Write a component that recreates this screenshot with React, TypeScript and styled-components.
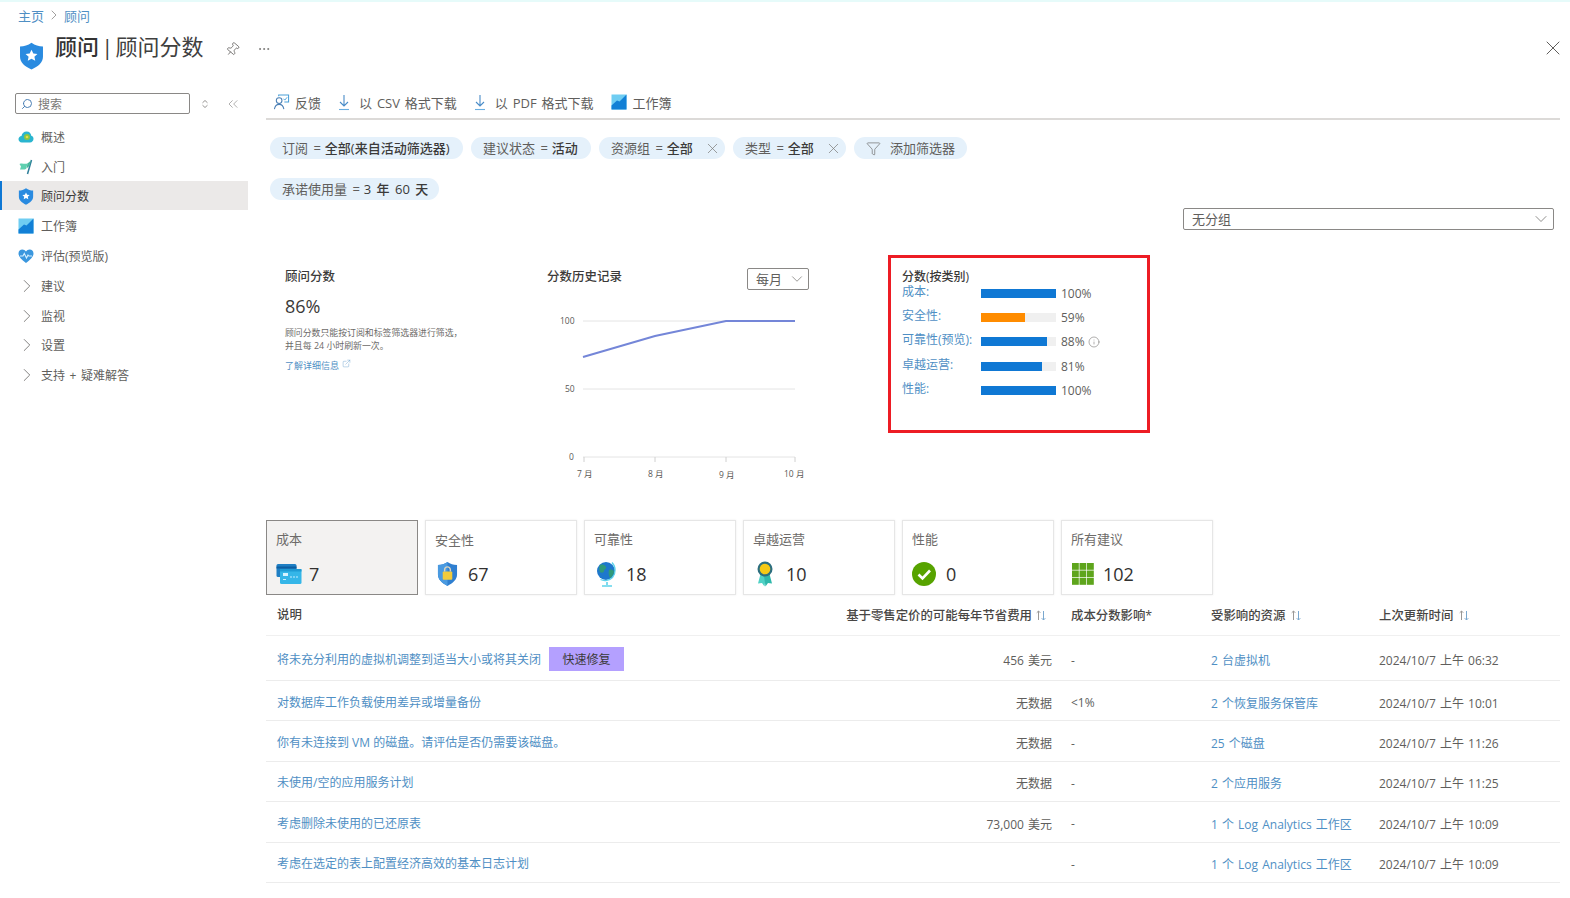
import styled, { createGlobalStyle } from "styled-components";
import {
  ChevronDown,
  ChevronRight,
  ChevronsLeft,
  Ellipsis,
  ExternalLink,
  Funnel,
  Info,
  Pin,
  Search,
  X,
} from "lucide-react";
import { ReactNode } from "react";

const GlobalStyle = createGlobalStyle`
  html, body {
    margin: 0;
    padding: 0;
    background: #fff;
    font-family: "Open Sans", "Noto Sans CJK SC", sans-serif;
    color: #605e5c;
  }
  * { box-sizing: border-box; }
`;

const BLUE = "#4f8fc4";

/* coloured icons */
const ShieldIcon = ({ size }: { size: number }) => (
  <svg width={size} height={size} viewBox="0 0 24 24" style={{ flexShrink: 0 }}>
    <path d="M12 1.5c3 2.200 6 3 9.500 3v8.500c0 4.800-4 8-9.500 10.500C6.500 21 2.500 17.800 2.500 13V4.500C6 4.500 9 3.700 12 1.500z" fill="#2a8be0" />
    <path d="M12 7.200l1.500 3.100 3.400.4-2.500 2.300.7 3.400-3.100-1.700-3.100 1.700.7-3.400-2.500-2.300 3.400-.4z" fill="#fff" />
  </svg>
);

const OverviewIcon = () => (
  <svg width="16" height="16" viewBox="0 0 16 16">
    <path d="M4 13.500C1.500 13.500.5 11.500.5 10S2 7 3.500 7C4 4 6 2.500 8.500 2.500c3 0 4.500 2 4.800 4.300 1.500.3 2.200 1.500 2.200 3 0 2-1.500 3.700-3.500 3.700z" fill="#2ab5cf" />
    <circle cx="9" cy="8" r="3" fill="#8cc63f" />
    <circle cx="9" cy="8" r="1.300" fill="#e8d84a" />
  </svg>
);

const StartIcon = () => (
  <svg width="16" height="16" viewBox="0 0 16 16">
    <path d="M1.500 5c3-1.200 5 .6 8-.5l-1.500 5.500c-2.500 1-4 .2-6 .5L3 7.500z" fill="#5fd0b0" />
    <path d="M13.500 1L9.500 15" stroke="#2f7f9a" strokeWidth="1.500" fill="none" />
    <path d="M9.500 4.500l3.500-3-1.600 5.500-3 2.500z" fill="#45b89a" />
  </svg>
);

const WorkbookIcon = ({ size }: { size: number }) => (
  <svg width={size} height={size} viewBox="0 0 16 16" style={{ flexShrink: 0 }}>
    <rect x="0.500" y="0.500" width="15" height="15" fill="#6fcdf2" />
    <path d="M.5 15.500V11.500L6 6.500l2.500 1L15.500.5v15z" fill="#1280d6" />
  </svg>
);

const HeartIcon = () => (
  <svg width="16" height="16" viewBox="0 0 16 16">
    <path d="M8 15C3 11 .5 8.500.5 5.500.5 3 2.300 1.500 4.300 1.500 5.800 1.500 7.200 2.300 8 3.500c.8-1.200 2.200-2 3.700-2 2 0 3.800 1.500 3.800 4 0 3-2.500 5.500-7.500 9.500z" fill="#3a97de" />
    <path d="M2 8h3l1.300-2.500L8.500 10l1.500-3 .8 1H14" stroke="#d6f0ff" strokeWidth="1.100" fill="none" />
  </svg>
);

const FeedbackIcon = () => (
  <svg width="17" height="18" viewBox="0 0 18 18" fill="none">
    <circle cx="6.500" cy="7.500" r="3" stroke="#4a7fb5" strokeWidth="1.100" />
    <path d="M1.500 16.500c.5-3 2.500-5 5-5s4.500 2 5 5" stroke="#4a7fb5" strokeWidth="1.100" />
    <path d="M6 3V1.500h10.500V9H12" stroke="#4a9fd8" strokeWidth="1.100" />
    <path d="M11 5.500l1.500 1.500L15 4" stroke="#4a9fd8" strokeWidth="1" />
  </svg>
);

const DownloadIcon = () => (
  <svg width="12" height="17" viewBox="0 0 12 17" fill="none" stroke="#4a8cc8" strokeWidth="1.100">
    <path d="M6 1v11M2 8l4 4 4-4" />
    <path d="M1 15.500h10" stroke="#6aaee0" />
  </svg>
);

const SortMarkIcon = () => (
  <svg width="10" height="11" viewBox="0 0 10 11" fill="none" stroke="#9a9896" strokeWidth="1">
    <path d="M2.500 10V1M.7 2.800l1.800-1.800 1.800 1.800" />
    <path d="M7.500 1v9M5.700 8.200l1.800 1.800 1.800-1.800" stroke="#7aa8cf" />
  </svg>
);

const UpDownIcon = () => (
  <svg width="8" height="10" viewBox="0 0 8 10" fill="none" stroke="#8a8886" strokeWidth="0.900">
    <path d="M1.500 3.800L4 1.500l2.500 2.300M1.500 6.200L4 8.500l2.500-2.300" />
  </svg>
);

const CostIcon = () => (
  <svg width="26" height="22" viewBox="0 0 26 22">
    <rect x="0.500" y="1" width="20" height="13" rx="1.500" fill="#1f7fc4" />
    <rect x="0.500" y="3.500" width="20" height="2" fill="#0d5ea0" />
    <rect x="4" y="6" width="21.500" height="15" rx="1.500" fill="#35b6e8" />
    <rect x="4" y="6" width="21.500" height="2.500" fill="#1f9bd4" />
    <rect x="7" y="10" width="5" height="3" fill="#d6f3ff" />
    <path d="M14 14h2M17 14h2M20 14h2M7 16.500h3" stroke="#c6eeff" strokeWidth="1.200" />
  </svg>
);

const LockShieldIcon = () => (
  <svg width="21" height="26" viewBox="0 0 22 26">
    <path d="M11 .5c3 2 6 3 10 3v10c0 5.500-4.500 9-10 12C5.500 22.500 1 19 1 13.500v-10c4 0 7-1 10-3z" fill="#2f7fd0" />
    <path d="M11 .5v25C5.500 22.500 1 19 1 13.500v-10c4 0 7-1 10-3z" fill="#4a9ae0" />
    <rect x="6" y="10.500" width="10" height="8.500" rx="1" fill="#f2cb3a" />
    <path d="M8 10.500V8.500a3 3 0 016 0v2" stroke="#d9d4c0" strokeWidth="1.500" fill="none" />
  </svg>
);

const GlobeIcon = () => (
  <svg width="22" height="26" viewBox="0 0 22 26">
    <circle cx="10" cy="10" r="9" fill="#1e78cc" />
    <path d="M4 4c3-1 5 0 6 2s-2 2-2 4-3 2-4 1-1-5 0-7zM13 9c2-1 4 0 5 1 0 3-2 6-4 7-1-2-2-5-1-8z" fill="#2f9a7a" />
    <path d="M16 1.500c4 4 4 11 .5 15-3 3-8 4-12 2" stroke="#5fd3ea" strokeWidth="1.300" fill="none" />
    <path d="M11 21v3M6 25h10" stroke="#5fd3ea" strokeWidth="1.600" />
  </svg>
);

const MedalIcon = () => (
  <svg width="18" height="26" viewBox="0 0 18 26">
    <path d="M4.500 13L2 22.500l4-.5 2.500 3.500L10 15z" fill="#4fd1c5" />
    <path d="M13.500 13l2.500 9.500-4-.5-2.500 3.500L8 15z" fill="#2fb8ab" />
    <circle cx="9" cy="8" r="7.500" fill="#2c6e7f" />
    <circle cx="9" cy="8" r="5.300" fill="#f6c915" />
  </svg>
);

const CheckIcon = () => (
  <svg width="24" height="24" viewBox="0 0 24 24">
    <circle cx="12" cy="12" r="12" fill="#57a300" />
    <path d="M6.500 12.500l4 4 7.500-8" stroke="#fff" strokeWidth="2.600" fill="none" />
  </svg>
);

const GridIcon = () => (
  <svg width="22" height="22" viewBox="0 0 22 22">
    {[0, 1, 2].flatMap((r) =>
      [0, 1, 2].map((c) => (
        <rect key={`${r}-${c}`} x={c * 7.500} y={r * 7.500} width="6.800" height="6.800" fill="#5ea51c" />
      )),
    )}
  </svg>
);

/* page shell */
const Page = styled.div`
  width: 1570px;
  height: 898px;
  overflow: hidden;
  display: flex;
  flex-direction: column;
  border-top: 2px solid #e6fbfa;
`;

const Header = styled.header`
  height: 91px;
  padding: 5px 5px 0 18px;
  display: flex;
  flex-direction: column;
`;

const Breadcrumb = styled.nav`
  display: flex;
  align-items: center;
  gap: 2px;
  height: 16px;
  font-size: 13px;
  color: ${BLUE};
  svg { color: #8a8886; }
`;

const TitleRow = styled.div`
  display: flex;
  align-items: center;
  margin-top: 8px;
  height: 40px;
`;

const TitleIconSlot = styled.span`
  display: flex;
  margin: 8px 9px 0 -1px;
`;

const Title = styled.h1`
  margin: -10px 0 0;
  font-size: 22px;
  font-weight: 400;
  color: #404040;
  line-height: 30px;
  word-spacing: -3.500px;
  b { font-weight: 500; color: #333; }
`;

const TitleAction = styled.span<{ $gap: number }>`
  display: flex;
  margin: -4px 0 0 ${(p) => p.$gap}px;
  color: #605e5c;
`;

const PinGlyph = styled(Pin)`
  transform: rotate(40deg);
`;

const CloseButton = styled.span`
  display: flex;
  margin: -6px 0 0 auto;
  color: #605e5c;
`;

const Body = styled.div`
  flex: 1;
  display: flex;
  gap: 18px;
  min-height: 0;
`;

/* side menu */
const Sidebar = styled.aside`
  width: 248px;
  flex-shrink: 0;
`;

const SearchRow = styled.div`
  display: flex;
  align-items: center;
  padding-left: 15px;
  height: 21px;
  margin-bottom: 7px;
`;

const SearchBox = styled.div`
  width: 175px;
  height: 21px;
  border: 1px solid #8a8886;
  border-radius: 2px;
  display: flex;
  align-items: center;
  gap: 5px;
  padding-left: 5px;
  font-size: 12px;
  color: #7a7876;
  svg { color: #4a7fb5; transform: scaleX(-1); }
`;

const SearchAction = styled.span<{ $gap: number }>`
  display: flex;
  margin-left: ${(p) => p.$gap}px;
  color: #8a8886;
`;

const MenuItem = styled.div<{ $active?: boolean; $gap: number }>`
  height: 29.800px;
  display: flex;
  align-items: center;
  gap: ${(p) => p.$gap}px;
  padding-top: 2px;
  padding-left: ${(p) => (p.$active ? 15 : 18)}px;
  font-size: 12px;
  word-spacing: 1.500px;
  color: ${(p) => (p.$active ? "#3b3a39" : "#605e5c")};
  background: ${(p) => (p.$active ? "#ebe9e8" : "transparent")};
  border-left: ${(p) => (p.$active ? "2px solid #0f78d4" : "none")};
`;

const MenuChevron = styled.span`
  display: flex;
  width: 17px;
  justify-content: center;
  color: #7a7876;
  svg { flex-shrink: 0; }
`;

/* main column */
const Main = styled.main`
  width: 1294px;
  display: flex;
  flex-direction: column;
`;

const Toolbar = styled.div`
  height: 27px;
  display: flex;
  align-items: flex-start;
  gap: 17px;
  padding-left: 7px;
  border-bottom: 2px solid #dcdad8;
`;

const ToolButton = styled.span<{ $gap: number }>`
  display: flex;
  align-items: center;
  gap: ${(p) => p.$gap}px;
  height: 18px;
  font-size: 13px;
  word-spacing: 1.500px;
  color: #605e5c;
  white-space: nowrap;
`;

const ChipRow = styled.div<{ $top: number }>`
  display: flex;
  gap: 8px;
  margin-top: ${(p) => p.$top}px;
  padding-left: 4px;
`;

const Chip = styled.span<{ $width: number }>`
  width: ${(p) => p.$width}px;
  height: 22px;
  display: inline-flex;
  align-items: center;
  padding: 0 12px 2px;
  border-radius: 11px;
  background: #e5f1fb;
  font-size: 13px;
  color: #605e5c;
  white-space: nowrap;
  word-spacing: 2px;
  b { font-weight: 500; color: #3b3a39; margin-left: 4px; }
`;

const ChipClose = styled.span`
  display: flex;
  margin-left: auto;
  margin-right: -8px;
  margin-top: 2px;
  color: #7a7876;
`;

const FilterGlyph = styled(Funnel)`
  margin: 2px 9px 0 0;
`;

const GroupRow = styled.div`
  display: flex;
  justify-content: flex-end;
  padding-right: 6px;
  margin-top: 8px;
`;

const Select = styled.div<{ $width: number }>`
  width: ${(p) => p.$width}px;
  height: 22px;
  display: flex;
  align-items: center;
  justify-content: space-between;
  padding: 0 2px 0 8px;
  border: 1px solid #8a8886;
  border-radius: 2px;
  font-size: 13px;
  color: #605e5c;
  span { margin-top: -2px; }
  svg { color: #7a7876; }
`;

const Panels = styled.section`
  height: 265px;
  margin-top: 25px;
  display: flex;
  padding-left: 19px;
`;

const ScorePanel = styled.div`
  width: 262px;
  padding-top: 15px;
`;

const PanelTitle = styled.h3`
  margin: 0;
  font-size: 12.500px;
  line-height: 14px;
  font-weight: 500;
  color: #3b3a39;
`;

const ScoreValue = styled.div`
  margin-top: 10px;
  font-size: 18px;
  line-height: 24px;
  color: #3b3a39;
`;

const ScoreNote = styled.p`
  margin: 8px 0 0;
  font-size: 8.900px;
  line-height: 13px;
  color: #6d6b69;
`;

const LearnLink = styled.a`
  display: inline-flex;
  align-items: flex-start;
  gap: 3px;
  margin-top: 4px;
  font-size: 9px;
  line-height: 13px;
  color: ${BLUE};
`;

const HistoryPanel = styled.div`
  width: 341px;
  padding-top: 13px;
`;

const HistoryHead = styled.div`
  width: 262px;
  height: 33px;
  display: flex;
  align-items: flex-start;
  justify-content: space-between;
  ${PanelTitle} { margin-top: 2px; }
`;

const ChartSvg = styled.svg`
  display: block;
  font-size: 8.500px;
  fill: #5a5856;
`;

const CategoryBox = styled.div`
  width: 262px;
  height: 178px;
  border: 3px solid #ed1c24;
  padding: 12px 0 0 11px;
`;

const CategoryTitle = styled.h3`
  margin: 0 0 -2px;
  font-size: 12px;
  line-height: 13px;
  font-weight: 500;
  color: #3b3a39;
`;

const CategoryRow = styled.div`
  height: 24.300px;
  display: flex;
  align-items: center;
  font-size: 12px;
`;

const CategoryLabel = styled.span`
  width: 79px;
  flex-shrink: 0;
  margin-top: -5px;
  color: ${BLUE};
  white-space: nowrap;
`;

const BarTrack = styled.span`
  width: 75px;
  height: 9px;
  background: #f0f0f0;
  display: flex;
`;

const BarFill = styled.span<{ $warn?: boolean }>`
  display: block;
  background: ${(p) => (p.$warn ? "#ff8c00" : "#0f78d4")};
`;

const BarValue = styled.span`
  margin-left: 5px;
  color: #605e5c;
  display: inline-flex;
  align-items: center;
  gap: 3px;
`;

const Cards = styled.div`
  display: flex;
  gap: 7px;
`;

const Card = styled.div<{ $active?: boolean; $titleDrop: number }>`
  width: 152px;
  height: 75px;
  padding: ${(p) => 10 + p.$titleDrop}px 0 0 9px;
  border: ${(p) => (p.$active ? "1px solid #8a8886" : "1px solid #e6e6e6")};
  background: ${(p) => (p.$active ? "#f3f2f1" : "#fff")};
  box-shadow: ${(p) => (p.$active ? "none" : "0 0 2px rgba(0,0,0,.08)")};
`;

const CardTitle = styled.div`
  font-size: 13px;
  line-height: 16px;
  color: #6d6b69;
`;

const CardValue = styled.div<{ $inset: number; $gap: number; $top: number }>`
  margin-top: ${(p) => p.$top}px;
  height: 28px;
  padding-left: ${(p) => p.$inset}px;
  display: flex;
  align-items: center;
  gap: ${(p) => p.$gap}px;
  font-size: 18px;
  font-weight: 500;
  color: #323130;
`;

/* table */
const GRID = "434px 352px 159px 168px 181px";

const TableHead = styled.div`
  height: 41px;
  display: grid;
  grid-template-columns: ${GRID};
  align-items: center;
  border-bottom: 1px solid #f0f0f0;
  font-size: 12.400px;
  font-weight: 500;
  color: #484644;
`;

const Row = styled.div<{ $tall?: boolean }>`
  height: ${(p) => (p.$tall ? "45px" : "40.400px")};
  display: grid;
  grid-template-columns: ${GRID};
  align-items: center;
  padding-top: 4px;
  border-bottom: 1px solid #ececec;
  font-size: 12px;
  word-spacing: 1px;
  color: #605e5c;
`;

const DescCell = styled.div`
  padding: 0 0 2px 11px;
  display: flex;
  align-items: center;
  gap: 8px;
  white-space: nowrap;
  word-spacing: 0;
`;

const AmountCell = styled.div<{ $head?: boolean }>`
  display: flex;
  justify-content: flex-end;
  align-items: center;
  gap: 4px;
  padding-right: ${(p) => (p.$head ? 6 : 0)}px;
  white-space: nowrap;
`;

const ImpactCell = styled.div`
  padding-left: 19px;
  white-space: nowrap;
`;

const PlainCell = styled.div`
  display: flex;
  align-items: center;
  gap: 6px;
  white-space: nowrap;
`;

const TableLink = styled.a`
  color: ${BLUE};
  white-space: nowrap;
`;

const QuickFix = styled.span`
  height: 24px;
  width: 75px;
  display: inline-flex;
  align-items: center;
  justify-content: center;
  background: #b4a0ff;
  font-size: 12px;
  color: #3b3a39;
`;

const menu: { label: string; icon?: ReactNode; active?: boolean }[] = [
  { label: "概述", icon: <OverviewIcon /> },
  { label: "入门", icon: <StartIcon /> },
  { label: "顾问分数", icon: <ShieldIcon size={18} />, active: true },
  { label: "工作簿", icon: <WorkbookIcon size={16} /> },
  { label: "评估(预览版)", icon: <HeartIcon /> },
  { label: "建议" },
  { label: "监视" },
  { label: "设置" },
  { label: "支持 + 疑难解答" },
];

const categories = [
  { label: "成本:", score: 100 },
  { label: "安全性:", score: 59, warn: true },
  { label: "可靠性(预览):", score: 88, info: true },
  { label: "卓越运营:", score: 81 },
  { label: "性能:", score: 100 },
];

const cards = [
  { title: "成本", value: "7", icon: <CostIcon />, active: true, inset: 0, gap: 7, drop: 0 },
  { title: "安全性", value: "67", icon: <LockShieldIcon />, inset: 2, gap: 10, drop: 1 },
  { title: "可靠性", value: "18", icon: <GlobeIcon />, inset: 2, gap: 8, drop: 0 },
  { title: "卓越运营", value: "10", icon: <MedalIcon />, inset: 3, gap: 12, drop: 0 },
  { title: "性能", value: "0", icon: <CheckIcon />, inset: 0, gap: 10, drop: 0 },
  { title: "所有建议", value: "102", icon: <GridIcon />, inset: 1, gap: 9, drop: 0 },
];

const rows = [
  { desc: "将未充分利用的虚拟机调整到适当大小或将其关闭", fix: true, amount: "456 美元", impact: "-", res: "2 台虚拟机", date: "2024/10/7 上午 06:32" },
  { desc: "对数据库工作负载使用差异或增量备份", amount: "无数据", impact: "<1%", res: "2 个恢复服务保管库", date: "2024/10/7 上午 10:01" },
  { desc: "你有未连接到 VM 的磁盘。请评估是否仍需要该磁盘。", amount: "无数据", impact: "-", res: "25 个磁盘", date: "2024/10/7 上午 11:26" },
  { desc: "未使用/空的应用服务计划", amount: "无数据", impact: "-", res: "2 个应用服务", date: "2024/10/7 上午 11:25" },
  { desc: "考虑删除未使用的已还原表", amount: "73,000 美元", impact: "-", res: "1 个 Log Analytics 工作区", date: "2024/10/7 上午 10:09" },
  { desc: "考虑在选定的表上配置经济高效的基本日志计划", amount: "", impact: "-", res: "1 个 Log Analytics 工作区", date: "2024/10/7 上午 10:09" },
];

const HistoryChart = () => (
  <ChartSvg width="261" height="190" viewBox="0 0 261 190">
    {[20, 88, 156].map((y) => (
      <line key={y} x1="36" x2="248" y1={y} y2={y} stroke="#e4e4e4" />
    ))}
    {[37, 108, 179, 248].map((x) => (
      <line key={x} x1={x} x2={x} y1="156" y2="161" stroke="#d0d0d0" />
    ))}
    <polyline points="36,56 108,35 179,20 248,20" fill="none" stroke="#7486d8" strokeWidth="2" />
    <text x="13" y="23">100</text>
    <text x="18" y="91">50</text>
    <text x="22" y="159">0</text>
    <text x="30" y="176">7 月</text>
    <text x="101" y="176">8 月</text>
    <text x="172" y="177">9 月</text>
    <text x="237" y="176">10 月</text>
  </ChartSvg>
);

const App = () => {
  return (
    <Page>
      <GlobalStyle />
      <Header>
        <Breadcrumb>
          <span>主页</span>
          <ChevronRight size={16} strokeWidth={1.200} />
          <span>顾问</span>
        </Breadcrumb>
        <TitleRow>
          <TitleIconSlot>
            <ShieldIcon size={29} />
          </TitleIconSlot>
          <Title>
            <b>顾问</b> | 顾问分数
          </Title>
          <TitleAction $gap={21}>
            <PinGlyph size={15} strokeWidth={1.200} />
          </TitleAction>
          <TitleAction $gap={17}>
            <Ellipsis size={14} strokeWidth={1.200} />
          </TitleAction>
          <CloseButton>
            <X size={24} strokeWidth={1} />
          </CloseButton>
        </TitleRow>
      </Header>
      <Body>
        <Sidebar>
          <SearchRow>
            <SearchBox>
              <Search size={12} />
              搜索
            </SearchBox>
            <SearchAction $gap={11}>
              <UpDownIcon />
            </SearchAction>
            <SearchAction $gap={16}>
              <ChevronsLeft size={16} strokeWidth={1} />
            </SearchAction>
          </SearchRow>
          {menu.map((item) => (
            <MenuItem
              key={item.label}
              $active={item.active}
              $gap={item.active || !item.icon ? 6 : 7}
            >
              {item.icon ?? (
                <MenuChevron>
                  <ChevronRight size={22} strokeWidth={1} />
                </MenuChevron>
              )}
              {item.label}
            </MenuItem>
          ))}
        </Sidebar>
        <Main>
          <Toolbar>
            <ToolButton $gap={5}>
              <FeedbackIcon />
              反馈
            </ToolButton>
            <ToolButton $gap={9}>
              <DownloadIcon />
              以 CSV 格式下载
            </ToolButton>
            <ToolButton $gap={9}>
              <DownloadIcon />
              以 PDF 格式下载
            </ToolButton>
            <ToolButton $gap={6}>
              <WorkbookIcon size={16} />
              工作簿
            </ToolButton>
          </Toolbar>
          <ChipRow $top={17}>
            <Chip $width={193}>
              订阅 = <b>全部(来自活动筛选器)</b>
            </Chip>
            <Chip $width={120}>
              建议状态 = <b>活动</b>
            </Chip>
            <Chip $width={126}>
              资源组 = <b>全部</b>
              <ChipClose>
                <X size={17} strokeWidth={1} />
              </ChipClose>
            </Chip>
            <Chip $width={113}>
              类型 = <b>全部</b>
              <ChipClose>
                <X size={17} strokeWidth={1} />
              </ChipClose>
            </Chip>
            <Chip $width={113}>
              <FilterGlyph size={15} strokeWidth={1} />
              添加筛选器
            </Chip>
          </ChipRow>
          <ChipRow $top={19}>
            <Chip $width={169}>
              承诺使用量 = <b>3 年 60 天</b>
            </Chip>
          </ChipRow>
          <GroupRow>
            <Select $width={371}>
              <span>无分组</span>
              <ChevronDown size={20} strokeWidth={1} />
            </Select>
          </GroupRow>
          <Panels>
            <ScorePanel>
              <PanelTitle>顾问分数</PanelTitle>
              <ScoreValue>86%</ScoreValue>
              <ScoreNote>
                顾问分数只能按订阅和标签筛选器进行筛选，
                <br />
                并且每 24 小时刷新一次。
              </ScoreNote>
              <LearnLink>
                了解详细信息
                <ExternalLink size={9} strokeWidth={1} />
              </LearnLink>
            </ScorePanel>
            <HistoryPanel>
              <HistoryHead>
                <PanelTitle>分数历史记录</PanelTitle>
                <Select $width={62}>
                  <span>每月</span>
                  <ChevronDown size={18} strokeWidth={1} />
                </Select>
              </HistoryHead>
              <HistoryChart />
            </HistoryPanel>
            <CategoryBox>
              <CategoryTitle>分数(按类别)</CategoryTitle>
              {categories.map((c) => (
                <CategoryRow key={c.label}>
                  <CategoryLabel>{c.label}</CategoryLabel>
                  <BarTrack>
                    <BarFill $warn={c.warn} style={{ width: `${c.score}%` }} />
                  </BarTrack>
                  <BarValue>
                    {c.score}%{c.info && <Info size={12} strokeWidth={1} />}
                  </BarValue>
                </CategoryRow>
              ))}
            </CategoryBox>
          </Panels>
          <Cards>
            {cards.map((c) => (
              <Card key={c.title} $active={c.active} $titleDrop={c.drop}>
                <CardTitle>{c.title}</CardTitle>
                <CardValue $inset={c.inset} $gap={c.gap} $top={13 - c.drop}>
                  {c.icon}
                  {c.value}
                </CardValue>
              </Card>
            ))}
          </Cards>
          <TableHead>
            <DescCell>说明</DescCell>
            <AmountCell $head>
              基于零售定价的可能每年节省费用 <SortMarkIcon />
            </AmountCell>
            <ImpactCell>成本分数影响*</ImpactCell>
            <PlainCell>
              受影响的资源 <SortMarkIcon />
            </PlainCell>
            <PlainCell>
              上次更新时间 <SortMarkIcon />
            </PlainCell>
          </TableHead>
          {rows.map((r) => (
            <Row key={r.desc} $tall={r.fix}>
              <DescCell>
                <TableLink>{r.desc}</TableLink>
                {r.fix && <QuickFix>快速修复</QuickFix>}
              </DescCell>
              <AmountCell>{r.amount}</AmountCell>
              <ImpactCell>{r.impact}</ImpactCell>
              <PlainCell>
                <TableLink>{r.res}</TableLink>
              </PlainCell>
              <PlainCell>{r.date}</PlainCell>
            </Row>
          ))}
        </Main>
      </Body>
    </Page>
  );
};

export default App;
